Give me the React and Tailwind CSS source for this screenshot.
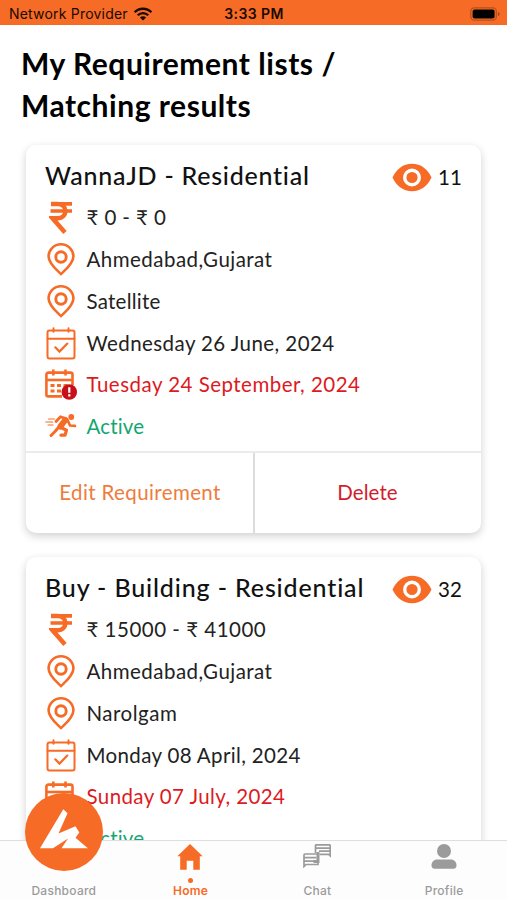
const requirements = [
    {
        id: 1,
        title: "WannaJD - Residential",
        titleClass: "tracking-[0.75px]",
        views: 11,
        price: "₹ 0 - ₹ 0",
        priceClass: "tracking-[0.4px]",
        city: "Ahmedabad,Gujarat",
        area: "Satellite",
        areaClass: "tracking-[0.25px]",
        createdAt: "Wednesday 26 June, 2024",
        createdClass: "tracking-[0.43px]",
        expiresAt: "Tuesday 24 September, 2024",
        expiresClass: "tracking-[0.48px]",
    },
    {
        id: 2,
        title: "Buy - Building - Residential",
        titleClass: "tracking-[0.86px]",
        views: 32,
        price: "₹ 15000 - ₹ 41000",
        priceClass: "tracking-[0.5px]",
        city: "Ahmedabad,Gujarat",
        area: "Narolgam",
        areaClass: "tracking-[0.5px]",
        createdAt: "Monday 08 April, 2024",
        createdClass: "tracking-[0.35px]",
        expiresAt: "Sunday 07 July, 2024",
        expiresClass: "tracking-[0.4px]",
    },
]

const WifiIcon = () => (
    <svg width="20" height="14" viewBox="0 0 20 14" fill="none" stroke="#1a0a02" strokeWidth="2.3">
        <path d="M1.6 5.2a11.9 11.9 0 0 1 16.8 0" />
        <path d="M4.7 8.3a7.5 7.5 0 0 1 10.6 0" />
        <path d="M10 13.6 6.9 10.5a4.4 4.4 0 0 1 6.2 0Z" fill="#1a0a02" stroke="none" />
    </svg>
)

const BatteryIcon = () => (
    <svg width="31" height="14" viewBox="0 0 31 14">
        <rect x="0.8" y="0.8" width="25.6" height="12.4" rx="3.6" fill="none" stroke="#b8501d" strokeWidth="1.3" />
        <rect x="2.6" y="2.6" width="22" height="8.8" rx="2" fill="#000" />
        <path d="M28 5v4c1-.3 1.6-1.1 1.6-2S29 5.3 28 5Z" fill="#a34a1c" />
    </svg>
)

const RupeeIcon = () => (
    <svg width="24" height="34" viewBox="0 0 24 34" fill="none" stroke="#f66b26">
        <path d="M2 2.800H23M1.500 10H23" strokeWidth="3.700" />
        <path d="M2 2.900h6.500c10.500 0 10.500 14.400 0 14.400H3.500L16 31.500" strokeWidth="4.500" />
    </svg>
)

const PinIcon = () => (
    <svg width="28" height="33" viewBox="0 0 28 33" fill="none" stroke="#f66b26">
        <path d="M14 31.200C10.500 27.500 1.600 20.500 1.600 13.400a12.400 12.100 0 0 1 24.800 0C26.400 20.500 17.500 27.500 14 31.200Z" strokeWidth="2.600" strokeLinejoin="round" />
        <circle cx="14" cy="14" r="5.200" strokeWidth="2.900" />
    </svg>
)

const CalendarCheckIcon = () => (
    <svg className="mt-px" width="30" height="33" viewBox="0 0 30 33" fill="none" stroke="#f66b26" strokeWidth="2" strokeLinecap="round">
        <rect x="1.500" y="3.500" width="27" height="28" rx="2" />
        <path d="M1.500 11.700h27M7.500 1.200v3.500M22.500 1.200v3.500" />
        <path d="m9.300 20.300 4.200 4.300 7.800-8" strokeWidth="2.200" />
    </svg>
)

const CalendarAlertIcon = () => (
    <svg className="mt-px" width="33" height="32" viewBox="0 0 33 32" fill="none" stroke="#f66b26" strokeWidth="2.600">
        <path d="M27.500 16V5.600a2 2 0 0 0-2-2H3.400a2 2 0 0 0-2 2v19.800a2 2 0 0 0 2 2H17" />
        <path d="M1.400 11h26" />
        <path d="M8.300.5v6M20.500.5v6" />
        <path d="M5.500 16.500h4M12 16.500h4M18.500 16.500h4M5.500 22h4M12 22h4" strokeWidth="3" />
        <circle cx="24.300" cy="23" r="7.800" fill="#c8101a" stroke="none" />
        <path d="M24.300 18.300v5.400M24.300 25.300v2.200" stroke="#fff" strokeWidth="2.200" />
    </svg>
)

const RunnerIcon = () => (
    <svg width="32" height="24" viewBox="0 0 32 24" fill="none" stroke="#f66b26" strokeLinecap="round" strokeLinejoin="round">
        <path d="M3.500 5h6M.8 8h7M3 11h5" strokeWidth="1.200" />
        <circle cx="26.300" cy="3" r="2.900" fill="#f66b26" stroke="none" />
        <path d="m11 7.500 4.500-4.800 5 1.800" strokeWidth="2.800" />
        <path d="m20.300 6-5 6.500" strokeWidth="6" />
        <path d="m22.500 6 2.500 5.500 5 .3" strokeWidth="2.700" />
        <path d="m15 13 6.500 3.200-1.500 5h-4" strokeWidth="3.200" />
        <path d="m12.500 14.500-2 2.500-4.500 4.500" strokeWidth="3" />
    </svg>
)

const EyeIcon = () => (
    <svg width="40" height="29" viewBox="0 0 40 29">
        <path d="M.5 14.500C4.500 6 11 .8 20 .8S35.500 6 39.500 14.500C35.500 23 29 28.200 20 28.200S4.500 23 .5 14.500Z" fill="#f66b26" />
        <circle cx="20" cy="14.500" r="7.300" fill="none" stroke="#fff" strokeWidth="3.400" />
    </svg>
)

const LogoMark = () => (
    <svg width="48" height="40" viewBox="0 0 48 40" fill="#fff">
        <path d="M23.300.3 27.500 4.200 18.500 24.500 35.500 17.300 39.300 23.500 35.500 28.800 47.900 39.300H21.500L28 29.500 13 39.300H0Z" />
    </svg>
)

const HomeIcon = () => (
    <svg width="26" height="26" viewBox="0 0 26 26" fill="#f66b26">
        <path d="M13 0 25.700 12.300H22.800V25.700H16.300V16.700H9.700V25.700H3.200V12.300H.3Z" />
    </svg>
)

const ChatIcon = () => (
    <svg width="28" height="24" viewBox="0 0 28 24" fill="none" stroke="#9b9b9b" strokeWidth="1.700">
        <path d="M12.500 9V1.800a1 1 0 0 1 1-1h12.700a1 1 0 0 1 1 1v10l-1.500-1.500H16.500" />
        <path d="M13 4.200H27M16 7.200H27" />
        <path d="M1 22.500V11a1 1 0 0 1 1-1h13v10.500H3Z" />
        <path d="M1 13.700h12.500M1 17.200H11" />
        <path d="M10.500 17.500H15V8" strokeWidth="3" />
    </svg>
)

const ProfileIcon = () => (
    <svg width="26" height="26" viewBox="0 0 26 26" fill="#9b9b9b">
        <circle cx="13" cy="7" r="7" />
        <path d="M.5 21.300c0-4 3-5.800 6-5.800h13c3 0 6 1.800 6 5.800 0 2.300-1 3.500-3 3.500h-19c-2 0-3-1.200-3-3.500Z" />
    </svg>
)

const InfoRow = ({ icon, className, children }) => (
    <div className="flex h-[41.700px] items-center">
        <div className="flex w-[34px] shrink-0 justify-center">{icon}</div>
        <span className={`ml-[8.500px] whitespace-nowrap text-[20.500px] ${className}`}>{children}</span>
    </div>
)

const RequirementCard = ({ item }) => (
    <div className="h-[388px] shrink-0 rounded-[10px] bg-white shadow-[0_3px_9px_rgba(0,0,0,0.19)] flex flex-col">
        <div className="flex h-[52px] items-center justify-between pt-[9px] pl-[19px] pr-[18px]">
            <h2 className={`whitespace-nowrap text-[25px] font-medium text-[#111] ${item.titleClass}`}>{item.title}</h2>
            <div className="flex items-center gap-[6px] pt-[3px]">
                <EyeIcon />
                <span className="w-[25px] text-[20.500px] text-[#111]">{item.views}</span>
            </div>
        </div>
        <div className="h-[254px] pl-[18px]">
            <InfoRow icon={<RupeeIcon />} className={`text-[#222] ${item.priceClass}`}>{item.price}</InfoRow>
            <InfoRow icon={<PinIcon />} className="text-[#222] tracking-[0.47px]">{item.city}</InfoRow>
            <InfoRow icon={<PinIcon />} className={`text-[#222] ${item.areaClass}`}>{item.area}</InfoRow>
            <InfoRow icon={<CalendarCheckIcon />} className={`text-[#222] ${item.createdClass}`}>{item.createdAt}</InfoRow>
            <InfoRow icon={<CalendarAlertIcon />} className={`text-[#dd1a22] ${item.expiresClass}`}>{item.expiresAt}</InfoRow>
            <InfoRow icon={<RunnerIcon />} className="text-[#12a672] tracking-[0.15px]">Active</InfoRow>
        </div>
        <div className="grid flex-1 grid-cols-[227px_1fr] border-t-2 border-[#ebebeb] text-[20.500px]">
            <button className="pb-[2px] pl-px tracking-[0.38px] text-[#ee7c3e]">Edit Requirement</button>
            <button className="border-l-2 border-[#dcdcdc] pb-[2px] pr-[1px] tracking-[0.1px] text-[#d31d2c]">Delete</button>
        </div>
    </div>
)

const Tab = ({ icon, label, active }) => (
    <div className="flex flex-1 flex-col items-center pt-[3px]">
        <div className="h-[34px]">{icon}</div>
        <div className={`h-[5px] w-[5px] rounded-full ${active ? "bg-[#f66b26]" : ""}`}></div>
        <span className={`pl-px text-[12px] leading-[15px] tracking-[0.25px] ${active ? "font-semibold text-[#f66b26]" : "font-medium text-[#9b9b9b]"}`}>{label}</span>
    </div>
)

export default function App() {
    return (
        <div className="flex h-[900px] w-[507px] flex-col overflow-hidden bg-white font-['Lato','Noto_Sans',sans-serif]">
            {/* Status bar */}
            <header className="grid h-[25px] shrink-0 grid-cols-3 items-center bg-[#f66b26] pl-[9px] pr-[6px] pt-[2px] font-['Inter',sans-serif] text-[14px] text-[#1a0a02]">
                <div className="flex items-center gap-[5px] whitespace-nowrap tracking-[0.2px]">
                    Network Provider
                    <WifiIcon />
                </div>
                <div className="pr-[2px] text-center font-semibold tracking-[0.4px]">3:33 PM</div>
                <div className="flex justify-end"><BatteryIcon /></div>
            </header>

            <main className="min-h-0 flex-1 overflow-hidden">
                <h1 className="pl-[21px] pt-[18px] text-[30px] font-bold leading-[41.500px] tracking-[0.53px] text-black">
                    My Requirement lists /<br />Matching results
                </h1>
                <div className="mt-[19px] flex flex-col gap-[24px] pl-[26px] pr-[26px]">
                    {requirements.map(item => <RequirementCard key={item.id} item={item} />)}
                </div>
            </main>

            {/* Bottom tabs */}
            <nav className="relative flex h-[60px] shrink-0 border-t border-[#dedede] bg-[#fdfdfd] font-['Inter',sans-serif]">
                <Tab label="Dashboard" />
                <Tab label="Home" icon={<HomeIcon />} active />
                <Tab label="Chat" icon={<ChatIcon />} />
                <Tab label="Profile" icon={<ProfileIcon />} />
                <div className="absolute -top-[48px] left-[25px] flex h-[78px] w-[78px] items-center justify-center rounded-full bg-[#f66b26] pb-[7px]">
                    <LogoMark />
                </div>
            </nav>
        </div>
    )
}
